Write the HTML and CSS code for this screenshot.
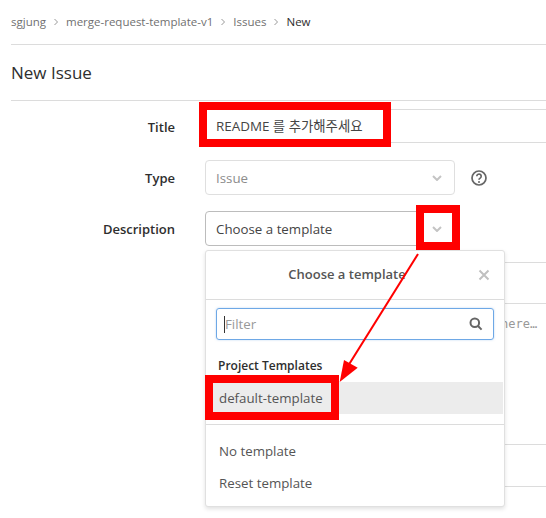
FILE: index.html
```html
<!DOCTYPE html>
<html lang="en">
<head>
    <meta charset="UTF-8">
    <title>New Issue</title>
    <link rel="stylesheet" href="styles.css">
</head>
<body>
    <div class="page">
        <!-- Breadcrumbs -->
        <nav class="crumbs">
            <a>sgjung</a>
            <svg class="crumb-sep" viewBox="0 0 6 8"><polyline points="1.5,1 4.5,4 1.5,7"/></svg>
            <a>merge-request-template-v1</a>
            <svg class="crumb-sep" viewBox="0 0 6 8"><polyline points="1.5,1 4.5,4 1.5,7"/></svg>
            <a>Issues</a>
            <svg class="crumb-sep" viewBox="0 0 6 8"><polyline points="1.5,1 4.5,4 1.5,7"/></svg>
            <strong>New</strong>
        </nav>

        <h1 class="page-title">New Issue</h1>

        <!-- Form -->
        <div class="form-row title-row">
            <label class="form-label">Title</label>
            <div class="title-input">README 를 추가해주세요</div>
        </div>

        <div class="form-row type-row">
            <label class="form-label">Type</label>
            <div class="select muted">
                <span>Issue</span>
                <svg class="chevron" viewBox="0 0 10 6"><polyline points="1,1 5,5 9,1"/></svg>
            </div>
            <svg class="help" viewBox="0 0 16 16">
                <circle cx="8" cy="8" r="7"/>
                <path d="M5.8 6.3a2.2 2.2 0 1 1 3.4 1.8c-.8.5-1.2.9-1.2 1.7"/>
                <circle class="help-dot" cx="8" cy="12" r="1"/>
            </svg>
        </div>

        <div class="form-row desc-row">
            <label class="form-label">Description</label>
            <div class="select-wrap">
                <div class="select active">
                    <span>Choose a template</span>
                    <svg class="chevron" viewBox="0 0 10 6"><polyline points="1,1 5,5 9,1"/></svg>
                </div>

                <div class="dropdown">
                    <div class="dropdown-head">
                        <span>Choose a template</span>
                        <svg class="close" viewBox="0 0 12 12"><path d="M1.5 1.5l9 9M10.5 1.5l-9 9"/></svg>
                    </div>
                    <div class="dropdown-search">
                        <div class="filter">
                            <span class="caret"></span>
                            <span class="filter-text">Filter</span>
                            <svg class="search" viewBox="0 0 14 14">
                                <circle cx="5.8" cy="5.8" r="4.3"/>
                                <path d="M9 9l3.6 3.6"/>
                            </svg>
                        </div>
                    </div>
                    <div class="group-label">Project Templates</div>
                    <div class="item selected">default-template</div>
                    <div class="divider"></div>
                    <div class="item">No template</div>
                    <div class="item">Reset template</div>
                </div>
            </div>
        </div>

        <!-- Markdown editor behind the dropdown -->
        <div class="editor">
            <div class="editor-tabs"></div>
            <div class="editor-toolbar"></div>
            <div class="editor-text">here…</div>
            <div class="editor-foot"></div>
        </div>

        <!-- Red annotations drawn over the screenshot -->
        <div class="mark mark-title"></div>
        <div class="mark mark-chevron"></div>
        <div class="mark mark-item"></div>
        <svg class="arrow" viewBox="0 0 546 518">
            <line x1="418" y1="254" x2="348" y2="366"/>
            <polygon points="339.7,382 344,360 357.7,367.7"/>
        </svg>
    </div>
</body>
</html>
```

FILE: styles.css
```css
* {
    box-sizing: border-box;
}

body {
    margin: 0;
    background-color: #fff;
    color: #2e2e2e;
    font-family: "Open Sans", "Noto Sans CJK KR", sans-serif;
    font-size: 13px;
    overflow: hidden;
}

.page {
    position: relative;
    height: 518px;
    padding-left: 11px;
    overflow: hidden;
}

/* Breadcrumbs */
.crumbs {
    display: flex;
    align-items: center;
    gap: 7px;
    height: 45px;
    padding-bottom: 1px;
    border-bottom: 1px solid #dcdcdc;
    font-size: 11.5px;
    color: #707070;
}

.crumbs strong {
    font-weight: 400;
    color: #2e2e2e;
}

.crumb-sep {
    width: 6px;
    height: 8px;
    fill: none;
    stroke: #999;
    stroke-width: 1;
}

.page-title {
    display: flex;
    align-items: center;
    height: 56px;
    margin: 0;
    border-bottom: 1px solid #dcdcdc;
    font-size: 17px;
    font-weight: 500;
}

/* Form rows */
.form-row {
    display: flex;
    align-items: center;
}

.form-label {
    width: 164px;
    margin-right: 30px;
    flex: none;
    text-align: right;
    font-weight: 600;
}

.title-row {
    height: 34px;
    margin-top: 8px;
}

.title-row .form-label {
    padding-top: 2px;
}

.title-input {
    flex: 1;
    height: 34px;
    padding-left: 11px;
    line-height: 33px;
    border-top: 1px solid #dcdcdc;
    border-bottom: 1px solid #dcdcdc;
    font-size: 13.4px;
    color: #444;
}

.type-row {
    margin-top: 17px;
}

.desc-row {
    margin-top: 16px;
}

.select {
    display: flex;
    align-items: center;
    justify-content: space-between;
    width: 250px;
    height: 35px;
    padding: 0 12px 0 10px;
    border: 1px solid #dfdfdf;
    border-radius: 4px;
    background-color: #fff;
    font-size: 13.3px;
}

.select.muted {
    color: #8c8c8c;
}

.select.active {
    border-color: #bcbcbc;
    color: #444;
}

.chevron {
    width: 10px;
    height: 6px;
    fill: none;
    stroke: #c4c4c4;
    stroke-width: 2;
}

.help {
    width: 16px;
    height: 16px;
    margin-left: 16px;
    fill: none;
    stroke: #666;
    stroke-width: 1.7;
}

.help .help-dot {
    fill: #666;
    stroke: none;
}

/* Template dropdown */
.select-wrap {
    position: relative;
}

.dropdown {
    position: absolute;
    top: 39px;
    left: 0;
    z-index: 2;
    width: 300px;
    height: 257px;
    background-color: #fff;
    border: 1px solid #e0e0e0;
    border-radius: 3px;
    box-shadow: 0 2px 4px rgba(0, 0, 0, 0.12);
    color: #555;
    font-size: 13.3px;
}

.dropdown-head {
    position: relative;
    height: 49px;
    padding-right: 16px;
    line-height: 47px;
    border-bottom: 1px solid #dcdcdc;
    text-align: center;
    font-size: 13px;
    font-weight: 600;
}

.close {
    position: absolute;
    top: 18px;
    right: 14px;
    width: 12px;
    height: 12px;
    fill: none;
    stroke: #c0c0c0;
    stroke-width: 2;
}

.dropdown-search {
    padding: 8px 10px 0;
}

.filter {
    display: flex;
    align-items: center;
    height: 32px;
    padding: 0 10px 0 7px;
    border: 1px solid #6ea8e6;
    border-radius: 3px;
    box-shadow: 0 0 2px rgba(110, 168, 230, 0.5);
}

.caret {
    width: 1px;
    height: 17px;
    background-color: #333;
}

.filter-text {
    flex: 1;
    color: #999;
}

.search {
    width: 14px;
    height: 14px;
    fill: none;
    stroke: #666;
    stroke-width: 2;
}

.group-label {
    height: 42px;
    padding: 16px 12px 0;
    line-height: 20px;
    font-size: 12px;
    font-weight: 600;
    color: #2e2e2e;
}

.item {
    height: 32px;
    padding: 0 13px;
    line-height: 32px;
}

.item.selected {
    margin-right: 1px;
    background-color: #ececec;
}

.divider {
    height: 1px;
    margin: 10px 0;
    background-color: #dcdcdc;
}

/* Editor lines, mostly hidden by the dropdown */
.editor {
    margin: 16px 0 0 194px;
}

.editor-tabs {
    height: 41px;
    border-top: 1px solid #dcdcdc;
}

.editor-toolbar {
    height: 1px;
    background-color: #dcdcdc;
}

.editor-text {
    height: 141px;
    padding: 13px 0 0 296px;
    border-bottom: 1px solid #dcdcdc;
    font-family: "DejaVu Sans Mono", monospace;
    font-size: 12px;
    color: #999;
}

.editor-foot {
    height: 42px;
    border-bottom: 1px solid #dcdcdc;
}

/* Annotations */
.mark {
    position: absolute;
    z-index: 3;
    border: 8px solid #f00;
}

.mark-title {
    top: 102px;
    left: 199px;
    width: 192px;
    height: 45px;
}

.mark-chevron {
    top: 205px;
    left: 416px;
    width: 44px;
    height: 45px;
}

.mark-item {
    top: 375px;
    left: 205px;
    width: 134px;
    height: 45px;
}

.arrow {
    position: absolute;
    top: 0;
    left: 0;
    z-index: 4;
    width: 546px;
    height: 518px;
}

.arrow line {
    stroke: #f00;
    stroke-width: 2;
}

.arrow polygon {
    fill: #f00;
}
```
